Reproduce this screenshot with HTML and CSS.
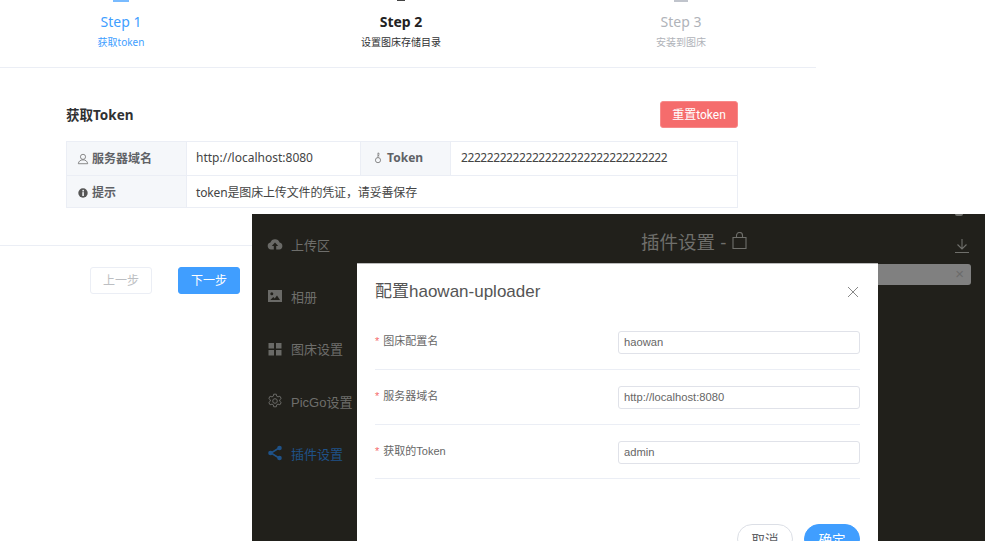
FILE: index.html
```html
<!DOCTYPE html>
<html lang="zh-CN">
<head>
    <meta charset="UTF-8">
    <meta name="viewport" content="width=device-width, initial-scale=1.0">
    <title>haowan-uploader</title>
    <link rel="stylesheet" href="styles.css">
</head>
<body>
    <div class="page">
        <!-- step bar, the icons are cut off by the top of the picture -->
        <div class="steps">
            <div class="step active">
                <span class="step-mark"></span>
                <div class="step-title">Step 1</div>
                <div class="step-desc">获取token</div>
            </div>
            <div class="step current">
                <span class="step-mark"></span>
                <div class="step-title">Step 2</div>
                <div class="step-desc">设置图床存储目录</div>
            </div>
            <div class="step">
                <span class="step-mark"></span>
                <div class="step-title">Step 3</div>
                <div class="step-desc">安装到图床</div>
            </div>
        </div>

        <div class="token-box">
            <div class="token-head">
                <h3>获取Token</h3>
                <button class="btn-reset">重置token</button>
            </div>
            <table class="desc-table">
                <tr>
                    <th class="col-label">
                        <svg class="th-icon" viewBox="0 0 14 14"><circle cx="7" cy="4.500" r="3" fill="none" stroke="#777" stroke-width="1"/><path d="M1.500 12.500c.5-3 2.500-4.500 5.500-4.500s5 1.500 5.500 4.500z" fill="none" stroke="#777" stroke-width="1"/></svg>
                        服务器域名
                    </th>
                    <td class="col-value">http://localhost:8080</td>
                    <th class="col-label-2">
                        <svg class="th-icon" viewBox="0 0 14 14"><circle cx="7" cy="9.500" r="3" fill="none" stroke="#777" stroke-width="1"/><path d="M7 6.500V1l2 1.500M7 3.500l1.500 1" fill="none" stroke="#777" stroke-width="1"/></svg>
                        Token
                    </th>
                    <td class="token-value">22222222222222222222222222222222</td>
                </tr>
                <tr>
                    <th>
                        <svg class="th-icon" viewBox="0 0 14 14"><circle cx="7" cy="7" r="5.500" fill="#555"/><rect x="6.200" y="6" width="1.800" height="4.500" fill="#f5f7fa"/><circle cx="7.200" cy="4.300" r="1" fill="#f5f7fa"/></svg>
                        提示
                    </th>
                    <td colspan="3" class="tip-text">token是图床上传文件的凭证，请妥善保存</td>
                </tr>
            </table>
        </div>

        <div class="page-foot">
            <button class="btn-prev">上一步</button>
            <button class="btn-next">下一步</button>
        </div>
    </div>

    <!-- PicGo window pasted on top of the page -->
    <div class="picgo">
        <div class="side">
            <div class="side-item">
                <svg viewBox="0 0 16 16"><path d="M4 13.500a3.500 3.500 0 0 1-.6-6.900 4.800 4.800 0 0 1 9.200 0 3.500 3.500 0 0 1-.3 6.900H9.200V10h2L8 6.500 4.800 10h2v3.500z" fill="#6a6a67"/></svg>
                上传区
            </div>
            <div class="side-item">
                <svg viewBox="0 0 16 16"><path d="M1 2h14v12H1zM3.300 12h9.700l-3-4.500-2.300 3-1.400-1.500zM4.800 7.200a1.500 1.500 0 1 0 0-3 1.500 1.500 0 0 0 0 3z" fill="#6a6a67" fill-rule="evenodd"/></svg>
                相册
            </div>
            <div class="side-item">
                <svg viewBox="0 0 16 16"><path d="M1.500 2h5.500v5.500H1.500zM9 2h5.500v5.500H9zM1.500 9H7v5.500H1.500zM9 9h5.500v5.500H9z" fill="#6a6a67"/></svg>
                图床设置
            </div>
            <div class="side-item">
                <svg viewBox="0 0 16 16"><circle cx="8" cy="8" r="2.300" fill="none" stroke="#6a6a67"/><path d="M6.700 1.200h2.600l.4 2 1.300.7 1.900-.7 1.300 2.300-1.500 1.300v1.400l1.500 1.300-1.300 2.300-1.900-.7-1.300.7-.4 2H6.700l-.4-2-1.300-.7-1.900.7-1.300-2.300 1.500-1.300V6.800L1.800 5.500l1.300-2.300 1.900.7 1.300-.7z" fill="none" stroke="#6a6a67"/></svg>
                PicGo设置
            </div>
            <div class="side-item on">
                <svg viewBox="0 0 16 16"><path d="M12 3 4 8l8 5" fill="none" stroke="#1f5288" stroke-width="1.500"/><circle cx="12.500" cy="3" r="2.300" fill="#1f5288"/><circle cx="3.500" cy="8" r="2.300" fill="#1f5288"/><circle cx="12.500" cy="13" r="2.300" fill="#1f5288"/></svg>
                插件设置
            </div>
        </div>
        <div class="plugin-head">
            插件设置 -
            <svg class="bag" viewBox="0 0 15 17"><path d="M1 5.500h13v11H1zM4.500 5.500V3.500a3 3 0 0 1 6 0v2" fill="none" stroke="#6f6f6b" stroke-width="1.100"/></svg>
        </div>
        <svg class="down-icon" viewBox="0 0 14 14"><path d="M7 0v9.500M2.500 5.500 7 10l4.500-4.500M0 13.500h14" fill="none" stroke="#6f6f6b" stroke-width="1.100"/></svg>
        <span class="top-dot"></span>
        <div class="search-bar"><span class="search-x">×</span></div>

        <div class="dialog">
            <div class="dialog-head">
                <span class="dialog-title">配置haowan-uploader</span>
                <svg class="dialog-close" viewBox="0 0 10 10"><path d="M0 0l10 10M10 0 0 10" stroke="#888" stroke-width="1"/></svg>
            </div>
            <div class="form-row">
                <label><i>*</i>图床配置名</label>
                <input type="text" value="haowan">
            </div>
            <div class="form-row">
                <label><i>*</i>服务器域名</label>
                <input type="text" value="http://localhost:8080">
            </div>
            <div class="form-row last">
                <label><i>*</i>获取的Token</label>
                <input type="text" value="admin">
            </div>
            <div class="dialog-foot">
                <button class="btn-cancel">取消</button>
                <button class="btn-ok">确定</button>
            </div>
        </div>
    </div>
</body>
</html>
```

FILE: styles.css
```css
* {
    margin: 0;
    padding: 0;
    box-sizing: border-box;
}

html, body {
    width: 985px;
    height: 541px;
    overflow: hidden;
    background-color: white;
}

body {
    position: relative;
    font-family: "Noto Sans", "Noto Sans CJK SC", sans-serif;
}

button {
    font-family: inherit;
}

.page {
    width: 816px;
}

.steps {
    display: grid;
    grid-template-columns: repeat(3, 280px);
    margin-left: -19px;
    height: 68px;
    border-bottom: 1px solid #ebeef5;
    text-align: center;
    color: #b0b3b9;
}

.step-mark {
    display: block;
    width: 14px;
    height: 2px;
    margin: 0 auto 10px;
    background-color: #c0c4cc;
}

.step-title {
    font-size: 14px;
    line-height: 20px;
}

.step-desc {
    font-size: 10px;
    line-height: 14px;
    margin-top: 3px;
}

.step.active {
    color: #409eff;
}

.step.active .step-mark {
    width: 16px;
    background-color: #79bbff;
}

.step.current {
    color: #303133;
}

.step.current .step-title {
    font-weight: bold;
    color: #222;
}

.step.current .step-mark {
    width: 8px;
    height: 1px;
    margin-bottom: 11px;
    background-color: #444;
}

.token-box {
    padding: 33px 0 0 66px;
    width: 738px;
}

.token-head {
    display: flex;
    justify-content: space-between;
    align-items: center;
    height: 27px;
    margin-bottom: 13px;
}

.token-head h3 {
    font-size: 13.500px;
    font-weight: bold;
    color: #303133;
    padding-bottom: 2px;
}

.btn-reset {
    width: 78px;
    height: 27px;
    padding-bottom: 2px;
    font-family: Roboto, "Noto Sans CJK SC", sans-serif;
    font-size: 12px;
    color: white;
    background-color: #f56c6c;
    border: 1px solid #f78989;
    border-radius: 3px;
}

.desc-table {
    width: 672px;
    border-collapse: collapse;
    table-layout: fixed;
    font-size: 12px;
    color: #444;
}

.desc-table th, .desc-table td {
    height: 32px;
    border: 1px solid #ebeef5;
    padding: 0 9px 0 10px;
    text-align: left;
}

.desc-table tr:first-child th, .desc-table tr:first-child td {
    height: 34px;
    padding-bottom: 2px;
}

.desc-table th {
    background-color: #f5f7fa;
    color: #606266;
    font-weight: bold;
}

.desc-table .col-label {
    width: 120px;
}

.desc-table .col-value {
    width: 174px;
}

.desc-table .col-label-2 {
    width: 90px;
    padding-left: 11px;
}

.desc-table td {
    padding-left: 9px;
}

.desc-table .tip-text {
    letter-spacing: -0.150px;
}

.desc-table .token-value {
    padding-left: 10px;
    letter-spacing: -0.420px;
}

.th-icon {
    width: 12px;
    height: 12px;
    vertical-align: -2px;
}

.page-foot {
    display: flex;
    gap: 26px;
    margin-top: 37px;
    padding: 21px 0 0 90px;
    border-top: 1px solid #ebeef5;
}

.page-foot button {
    width: 62px;
    height: 27px;
    padding-bottom: 2px;
    font-size: 12px;
    border-radius: 3px;
}

.btn-prev {
    color: #bcbec2;
    background-color: white;
    border: 1px solid #ebeef5;
}

.btn-next {
    color: white;
    background-color: #409eff;
    border: 1px solid #409eff;
}

/* second screenshot */
.picgo {
    position: absolute;
    left: 252px;
    top: 214px;
    width: 733px;
    height: 327px;
    background-color: #21201b;
    font-family: "Liberation Sans", "Noto Sans CJK SC", sans-serif;
    color: #6e6e6b;
}

.side {
    padding-top: 4px;
}

.side-item {
    display: flex;
    align-items: center;
    gap: 8px;
    height: 52.300px;
    padding-left: 15px;
    font-size: 13px;
}

.side-item svg {
    width: 16px;
    height: 16px;
}

.side-item.on {
    color: #1f5288;
}

.plugin-head {
    position: absolute;
    left: 389px;
    top: 15px;
    display: flex;
    align-items: center;
    gap: 6px;
    font-size: 18.500px;
    line-height: 27px;
    color: #6f6f6b;
}

.bag {
    width: 15px;
    height: 17px;
    margin-bottom: 4px;
}

.down-icon {
    position: absolute;
    left: 703px;
    top: 25px;
    width: 14px;
    height: 14px;
}

.top-dot {
    position: absolute;
    left: 703px;
    top: 0;
    width: 8px;
    height: 2px;
    border-radius: 0 0 4px 4px;
    background-color: #6f6f6b;
}

.search-bar {
    position: absolute;
    left: 560px;
    top: 50px;
    width: 159px;
    height: 21px;
    background-color: #808080;
    border-radius: 3px;
}

.search-x {
    position: absolute;
    right: 7px;
    top: 1px;
    font-size: 15px;
    line-height: 18px;
    color: #6b6b6b;
}

.dialog {
    position: absolute;
    left: 105px;
    top: 49px;
    width: 521px;
    height: 278px;
    padding: 0 18px;
    background-color: white;
    border-top: 1px solid #bbb;
}

.dialog-head {
    display: flex;
    justify-content: space-between;
    align-items: center;
    height: 51px;
    padding-top: 4px;
}

.dialog-title {
    font-size: 17px;
    color: #555;
    padding-bottom: 5px;
}

.dialog-close {
    width: 10px;
    height: 10px;
    margin-right: 2px;
}

.form-row {
    display: flex;
    justify-content: space-between;
    height: 55px;
    padding-top: 16px;
    border-bottom: 1px solid #ebeef5;
}

.form-row.last {
    height: 54px;
}

.form-row label {
    font-size: 11px;
    line-height: 20px;
    color: #666;
}

.form-row label i {
    color: #f56c6c;
    font-style: normal;
    margin-right: 4px;
}

.form-row input {
    width: 242px;
    height: 23px;
    padding: 0 5px 1px;
    font-family: inherit;
    font-size: 11.200px;
    color: #666;
    border: 1px solid #e0e2e9;
    border-radius: 3px;
}

.dialog-foot {
    display: flex;
    justify-content: flex-end;
    gap: 11px;
    padding-top: 45px;
}

.dialog-foot button {
    width: 56px;
    height: 30px;
    font-family: inherit;
    font-size: 13.500px;
    border-radius: 15px;
}

.btn-cancel {
    color: #606266;
    background-color: white;
    border: 1px solid #dcdfe6;
}

.btn-ok {
    color: white;
    background-color: #409eff;
    border: 1px solid #409eff;
}
```
